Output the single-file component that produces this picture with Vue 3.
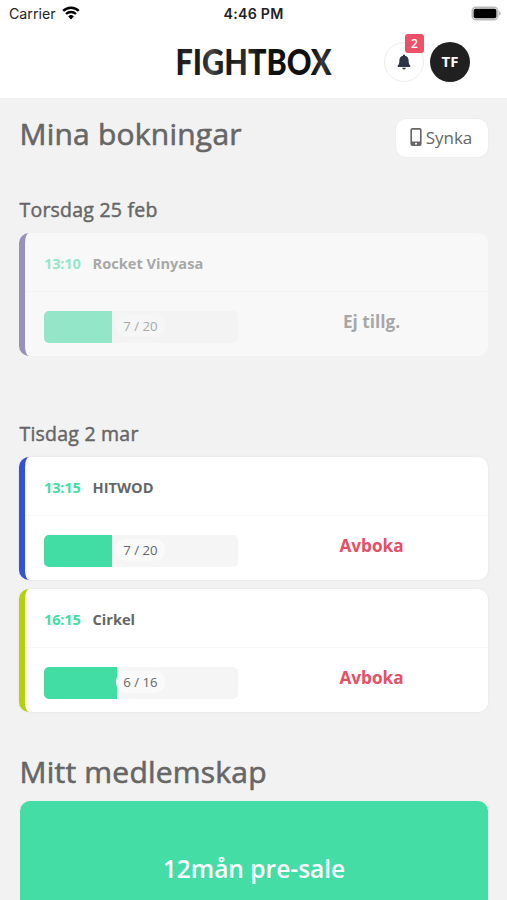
<script setup>
const days = [
  {
    label: 'Torsdag 25 feb',
    bookings: [
      { time: '13:10', name: 'Rocket Vinyasa', count: '7 / 20', fill: 35, color: '#4a3a90', action: 'Ej tillg.', disabled: true },
    ],
  },
  {
    label: 'Tisdag 2 mar',
    bookings: [
      { time: '13:15', name: 'HITWOD', count: '7 / 20', fill: 35, color: '#3451db', action: 'Avboka', disabled: false },
      { time: '16:15', name: 'Cirkel', count: '6 / 16', fill: 37.5, color: '#b4d20b', action: 'Avboka', disabled: false },
    ],
  },
]
</script>

<template>
  <div class="screen">
    <header class="top">
      <div class="status">
        <div class="carrier">
          <span>Carrier</span>
          <svg class="wifi" viewBox="0 0 18 14" width="18" height="14">
            <path d="M1.200 4.800a11.200 11.200 0 0 1 15.600 0" fill="none" stroke="#000" stroke-width="2.5" />
            <path d="M4 8a7.200 7.200 0 0 1 10 0" fill="none" stroke="#000" stroke-width="2.3" />
            <path d="M6.200 10.400a4 4 0 0 1 5.600 0L9 13.400z" fill="#000" />
          </svg>
        </div>
        <div class="clock">4:46 PM</div>
        <div class="battery">
          <svg viewBox="0 0 32 16" width="32" height="16">
            <rect x="2.2" y="1.2" width="25.600" height="12.600" rx="4" fill="#eee" stroke="#b9b9b9" stroke-width="1.5" />
            <rect x="3.600" y="2.800" width="22.800" height="9.400" rx="2" fill="#000" />
            <path d="M29.200 5.400c2 .6 2 3.600 0 4.200z" fill="#aaa" />
          </svg>
        </div>
      </div>
      <div class="nav">
        <svg class="logo" viewBox="0 0 200 70" width="200" height="70">
          <defs>
            <linearGradient id="ink" x1="0" y1="0" x2="1" y2="0">
              <stop offset="0" stop-color="#111" />
              <stop offset=".06" stop-color="#242424" />
              <stop offset=".17" stop-color="#191919" />
              <stop offset=".22" stop-color="#4a4a4a" />
              <stop offset=".32" stop-color="#151515" />
              <stop offset=".46" stop-color="#303030" />
              <stop offset=".55" stop-color="#101010" />
              <stop offset=".88" stop-color="#101010" />
              <stop offset=".94" stop-color="#3a3a3a" />
              <stop offset="1" stop-color="#161616" />
            </linearGradient>
          </defs>
          <text x="22.500" y="48" textLength="156" lengthAdjust="spacingAndGlyphs" fill="url(#ink)">FIGHTBOX</text>
        </svg>
        <div class="bell">
          <svg viewBox="0 0 14 16" width="14" height="16">
            <path d="M7 .4c.6 0 1 .4 1 1v.4c2.200.5 3.600 2.200 3.600 4.500 0 3 .5 4.200 1.600 5.200.6.600.2 1.500-.6 1.500H1.400c-.8 0-1.200-.9-.6-1.500 1.100-1 1.600-2.200 1.600-5.200C2.400 4 3.800 2.300 6 1.800v-.4c0-.6.4-1 1-1zM5.200 13.700h3.600a1.800 1.800 0 0 1-3.600 0z" fill="#2b3547" />
          </svg>
          <span class="badge">2</span>
        </div>
        <div class="avatar">TF</div>
      </div>
    </header>

    <main>
      <div class="title-row">
        <h1>Mina bokningar</h1>
        <button class="sync">
          <svg viewBox="0 0 12 18" width="12" height="18">
            <path fill-rule="evenodd" d="M2.400 0h7.200A2 2 0 0 1 11.600 2v14a2 2 0 0 1-2 2H2.400a2 2 0 0 1-2-2V2a2 2 0 0 1 2-2zM2 1.800v11.700h8V1.800zM5 15.700a1 1 0 1 0 2 0 1 1 0 0 0-2 0z" fill="#666" />
          </svg>
          <span>Synka</span>
        </button>
      </div>

      <section v-for="day in days" :key="day.label" class="day">
        <h2>{{ day.label }}</h2>
        <article
          v-for="b in day.bookings"
          :key="b.time"
          class="card"
          :class="{ disabled: b.disabled }"
          :style="{ borderLeftColor: b.color }"
        >
          <div class="head">
            <span class="time">{{ b.time }}</span>
            <span class="name">{{ b.name }}</span>
          </div>
          <div class="body">
            <div class="bar">
              <div class="fill" :style="{ width: b.fill + '%' }"></div>
              <span class="count">{{ b.count }}</span>
            </div>
            <div class="action">{{ b.action }}</div>
          </div>
        </article>
      </section>

      <h1 class="member-title">Mitt medlemskap</h1>
      <div class="member">12mån pre-sale</div>
    </main>
  </div>
</template>

<style>
body {
  background: #f2f2f2;
}
</style>

<style scoped>
.screen {
  width: 507px;
  height: 900px;
  overflow: hidden;
  background: #f2f2f2;
  color: #666;
  font-family: 'Open Sans', sans-serif;
}
.top {
  box-sizing: border-box;
  height: 99px;
  background: #fff;
  border-bottom: 1px solid #f0f0f0;
}
.status {
  display: grid;
  grid-template-columns: 1fr auto 1fr;
  align-items: center;
  height: 27px;
  padding: 0 5px 0 9px;
  color: #222;
  font: 14.2px/27px Inter, sans-serif;
}
.carrier {
  display: flex;
  align-items: center;
  gap: 6px;
}
.wifi {
  margin-top: -2px;
}
.clock {
  margin-left: -4px;
  font-weight: 600;
  letter-spacing: 0.25px;
}
.battery {
  display: flex;
  justify-content: flex-end;
}
.nav {
  display: flex;
  align-items: center;
  height: 70px;
  padding: 0 37px 0 153px;
}
.logo {
  margin-right: auto;
}
.logo text {
  font: 900 36.5px Lato, sans-serif;
}
.bell,
.avatar {
  box-sizing: border-box;
  display: flex;
  align-items: center;
  justify-content: center;
  width: 40px;
  height: 40px;
  border-radius: 50%;
}
.bell {
  position: relative;
  margin-right: 6px;
  border: 1px solid #eee;
}
.badge {
  position: absolute;
  top: -9px;
  right: -1px;
  width: 19px;
  height: 19px;
  border-radius: 3px;
  background: #ed5169;
  color: #fff;
  font-size: 12px;
  font-weight: 600;
  line-height: 19px;
  text-align: center;
}
.avatar {
  padding-bottom: 2px;
  background: #202020;
  color: #fff;
  font-size: 15px;
  font-weight: 700;
}
main {
  padding: 19px 19px 0;
}
h1,
h2 {
  margin: 0;
  font-weight: 400;
}
h1 {
  padding-left: 0.5px;
  font-size: 30px;
  line-height: 32px;
  letter-spacing: 0.22px;
  -webkit-text-stroke: 0.6px #666;
}
.title-row {
  display: flex;
  justify-content: space-between;
  height: 38px;
  margin-bottom: 41px;
}
.sync {
  display: flex;
  align-items: center;
  justify-content: center;
  gap: 4px;
  box-sizing: border-box;
  width: 92px;
  height: 38px;
  margin-top: 1px;
  padding: 0 2px 2px 0;
  border: 0;
  border-radius: 10px;
  background: #fff;
  box-shadow: 0 0 2px #0001;
  color: #666;
  font: 17px 'Open Sans', sans-serif;
}
.day {
  margin-bottom: 65px;
}
.day:last-of-type {
  margin-bottom: 44px;
}
h2 {
  height: 36px;
  padding-left: 0.5px;
  font-size: 19.5px;
  line-height: 26px;
  letter-spacing: 0.22px;
  -webkit-text-stroke: 0.45px #666;
}
.card {
  box-sizing: border-box;
  height: 123px;
  border-left: 6px solid;
  border-radius: 10px;
  background: #fff;
  box-shadow: 0 0 3px #0001;
}
.card + .card {
  margin-top: 9px;
}
.disabled {
  opacity: 0.53;
  box-shadow: none;
}
.head {
  display: flex;
  align-items: center;
  gap: 12px;
  box-sizing: border-box;
  height: 59px;
  padding: 1px 0 0 19px;
  border-bottom: 1px solid #f6f6f6;
  font-size: 14.6px;
  font-weight: 700;
}
.time {
  color: #42dda5;
  letter-spacing: -0.2px;
}
.body {
  display: flex;
  padding: 19px 19px 0;
}
.bar {
  display: flex;
  align-items: center;
  position: relative;
  width: 194px;
  height: 32px;
  border-radius: 5px;
  overflow: hidden;
  background: #f5f5f5;
}
.fill {
  height: 100%;
  background: #42dda5;
}
.count {
  position: absolute;
  top: 4px;
  left: 72px;
  width: 49px;
  height: 22px;
  border-radius: 10px;
  background: #fafafa;
  font-size: 13.2px;
  line-height: 22px;
  text-align: center;
}
.action {
  flex: 1;
  padding-left: 40px;
  padding-right: 4px;
  color: #e55065;
  font-size: 17.2px;
  font-weight: 700;
  line-height: 21px;
  text-align: center;
}
.disabled .action {
  color: #666;
}
.member {
  height: 160px;
  margin: 13px 0 0 1px;
  border-radius: 10px;
  background: #44dda5;
  color: #fff;
  font-size: 24.5px;
  font-weight: 600;
  line-height: 136px;
  text-align: center;
}
</style>
